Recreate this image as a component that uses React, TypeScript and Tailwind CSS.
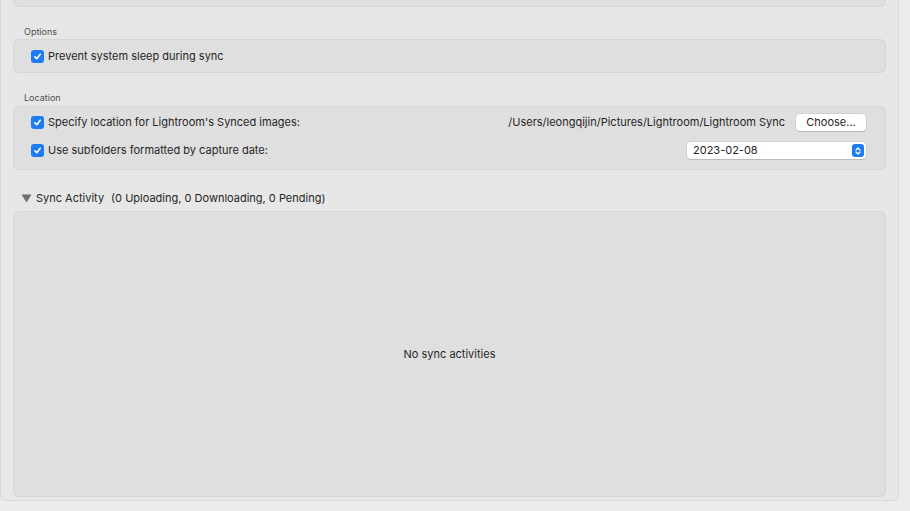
function Check() {
    return (
        <span className="flex h-[13px] w-[13px] shrink-0 items-center justify-center rounded-[3px] bg-[#1f7bf2]">
            <svg width="9" height="9" viewBox="0 0 10 10">
                <path d="M2 5.3 L4.2 7.5 L8 2.5" fill="none" stroke="white" strokeWidth="1.8" strokeLinecap="round" strokeLinejoin="round" />
            </svg>
        </span>
    )
}

function GroupLabel({ children }: { children: React.ReactNode }) {
    return <div className="px-[11px] text-[9px] leading-[11px] text-[#4d4d4d]">{children}</div>
}

export default function App() {
    return (
        <div className="h-[511px] w-[910px] overflow-hidden bg-[#ececec] font-['Inter',sans-serif] text-[#262626]">
            <div className="h-[501px] w-[899px] rounded-b-[5px] border-x border-b border-[#d9d9d9] bg-[#e7e7e7] px-[12px]">
                {/* top group (cut off) */}
                <div className="h-[7px] rounded-b-[6px] border-x border-b border-[#d6d6d6] bg-[#dfdfdf]" />

                {/* Options */}
                <div className="mt-[19px]">
                    <GroupLabel>Options</GroupLabel>
                </div>
                <div className="mt-[2px] flex h-[34px] items-center rounded-[6px] border border-[#d6d6d6] bg-[#dfdfdf] px-[17px]">
                    <label className="flex items-center gap-[4px] text-[11px]">
                        <Check />
                        Prevent system sleep during sync
                    </label>
                </div>

                {/* Location */}
                <div className="mt-[19px]">
                    <GroupLabel>Location</GroupLabel>
                </div>
                <div className="mt-[3px] flex h-[64px] flex-col gap-[11px] rounded-[6px] border border-[#d6d6d6] bg-[#dfdfdf] pl-[17px] pr-[19px] pt-[7px]">
                    <div className="flex h-[17px] items-center text-[11px]">
                        <Check />
                        <span className="ml-[4px]">Specify location for Lightroom's Synced images:</span>
                        <span className="ml-auto">/Users/leongqijin/Pictures/Lightroom/Lightroom Sync</span>
                        <button className="ml-[11px] h-[17px] w-[70px] rounded-[4px] bg-white text-[11px] shadow-[0_0_0_0.5px_rgba(0,0,0,0.12),0_1px_1px_rgba(0,0,0,0.12)]">
                            Choose...
                        </button>
                    </div>
                    <div className="flex h-[17px] items-center text-[11px]">
                        <Check />
                        <span className="ml-[4px]">Use subfolders formatted by capture date:</span>
                        <div className="ml-auto flex h-[17px] w-[179px] items-center justify-between rounded-[4px] bg-white pl-[6px] pr-[2px] shadow-[0_0_0_0.5px_rgba(0,0,0,0.12),0_1px_1px_rgba(0,0,0,0.12)]">
                            <span>2023-02-08</span>
                            <span className="flex h-[13px] w-[12px] items-center justify-center rounded-[3px] bg-[#1f7bf2]">
                                <svg width="8" height="10" viewBox="0 0 8 10">
                                    <path d="M2 4 L4 2 L6 4 M2 6 L4 8 L6 6" fill="none" stroke="white" strokeWidth="1.3" strokeLinecap="round" strokeLinejoin="round" />
                                </svg>
                            </span>
                        </div>
                    </div>
                </div>

                {/* Sync Activity */}
                <div className="mt-[21px] flex h-[14px] items-center gap-[4px] pl-[8px] text-[11px]">
                    <svg width="11" height="9" viewBox="0 0 11 9">
                        <path d="M0.5 0.5 H10.5 L5.5 8.5 Z" fill="#6e6e6e" />
                    </svg>
                    <span>Sync Activity</span>
                    <span className="ml-[3px]">(0 Uploading, 0 Downloading, 0 Pending)</span>
                </div>
                <div className="mt-[6px] flex h-[286px] items-center justify-center rounded-[6px] border border-[#d6d6d6] bg-[#dfdfdf] text-[11px]">
                    No sync activities
                </div>
            </div>
        </div>
    )
}
